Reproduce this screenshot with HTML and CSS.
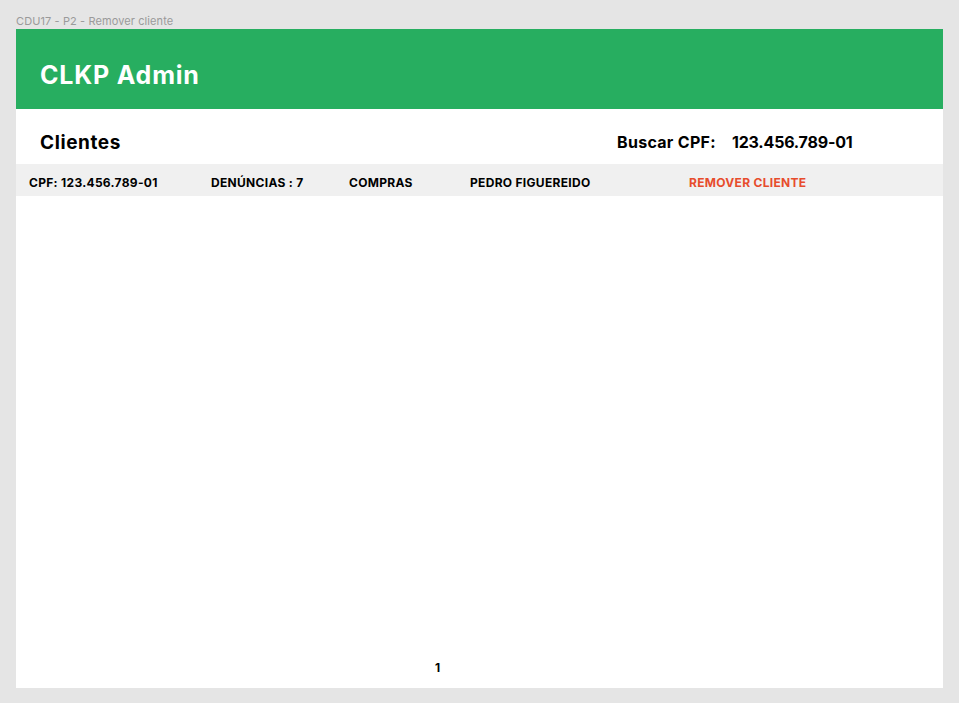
FILE: index.html
```html
<!DOCTYPE html>
<html lang="pt-BR">
<head>
<meta charset="utf-8">
<title>CDU17 - P2 - Remover cliente</title>
<link rel="stylesheet" href="styles.css">
</head>
<body>
<div class="frame-label">CDU17 - P2 - Remover cliente</div>
<div class="frame">
  <header class="topbar">
    <h1 class="brand">CLKP Admin</h1>
  </header>
  <div class="toolbar">
    <h2 class="section-title">Clientes</h2>
    <div class="search">
      <span class="search-label">Buscar CPF:</span>
      <span class="search-value">123.456.789-01</span>
    </div>
  </div>
  <div class="row">
    <span class="cell c-cpf">CPF: 123.456.789-01</span>
    <span class="cell c-den">DENÚNCIAS : 7</span>
    <span class="cell c-comp">COMPRAS</span>
    <span class="cell c-name">PEDRO FIGUEREIDO</span>
    <span class="cell c-act">REMOVER CLIENTE</span>
  </div>
  <div class="list-body"></div>
  <div class="pager">1</div>
</div>
</body>
</html>
```
FILE: styles.css
```css
html, body {
  margin: 0;
  padding: 0;
}
body {
  background: #e5e5e5;
  width: 959px;
  height: 703px;
  overflow: hidden;
  font-family: Inter, "Noto Sans", sans-serif;
  padding: 13px 16px 0 16px;
  box-sizing: border-box;
}
.frame-label {
  font-size: 11px;
  line-height: 16px;
  color: #9a9a9a;
  height: 16px;
  letter-spacing: 0.1px;
}
.frame {
  width: 927px;
  height: 659px;
  background: #ffffff;
  display: flex;
  flex-direction: column;
}
.topbar {
  background: #27ae60;
  height: 80px;
  box-sizing: border-box;
  display: flex;
  align-items: center;
  padding-left: 24px;
  padding-top: 11px;
}
.brand {
  margin: 0;
  color: #ffffff;
  font-size: 25px;
  font-weight: 700;
  letter-spacing: 0.8px;
}
.toolbar {
  height: 55px;
  box-sizing: border-box;
  display: flex;
  align-items: center;
  padding-left: 24px;
  padding-top: 11px;
}
.section-title {
  margin: 0;
  font-size: 19px;
  font-weight: 700;
  color: #000;
  width: 577px;
  letter-spacing: 0.6px;
}
.search {
  display: flex;
  font-size: 16px;
  font-weight: 700;
  color: #000;
}
.search-label {
  width: 115px;
  letter-spacing: 0.3px;
}
.search-value {
  letter-spacing: -0.2px;
}
.row {
  height: 32px;
  box-sizing: border-box;
  background: #f0f0f0;
  display: flex;
  align-items: center;
  padding-left: 13px;
  padding-top: 4px;
  font-size: 12px;
  font-weight: 700;
  color: #000;
  letter-spacing: 0.3px;
}
.cell { display: block; }
.c-cpf { width: 182px; }
.c-den { width: 138px; }
.c-comp { width: 121px; }
.c-name { width: 219px; }
.c-act { color: #e74c2c; }
.list-body {
  flex: 1;
}
.pager {
  height: 41px;
  box-sizing: border-box;
  padding-top: 13px;
  font-size: 12px;
  font-weight: 700;
  padding-left: 419px;
  color: #000;
}
```
